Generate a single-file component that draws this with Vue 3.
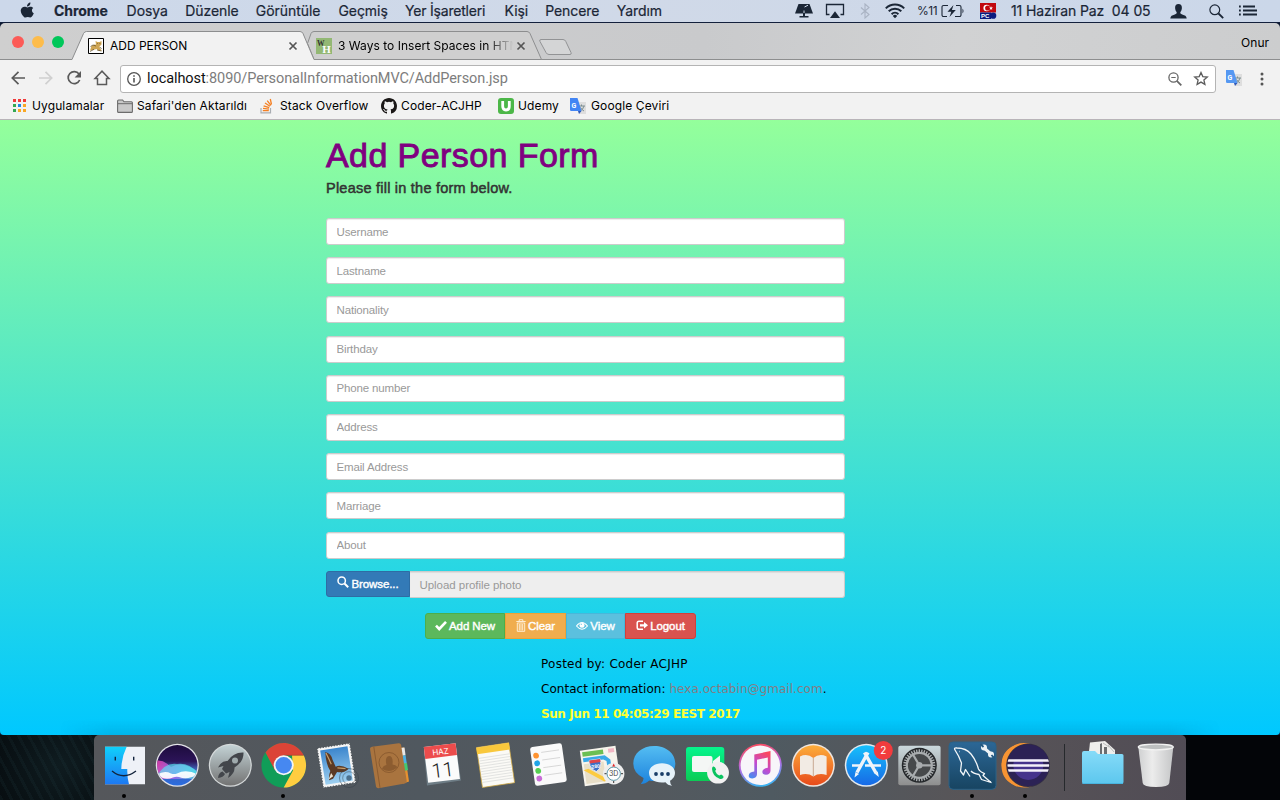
<script setup>
const menus = [
  { label: 'Chrome', w: 54, bold: true },
  { label: 'Dosya', w: 40 },
  { label: 'Düzenle', w: 52 },
  { label: 'Görüntüle', w: 64 },
  { label: 'Geçmiş', w: 48 },
  { label: 'Yer İşaretleri', w: 81, tight: true },
  { label: 'Kişi', w: 22 },
  { label: 'Pencere', w: 53 },
  { label: 'Yardım', w: 44 },
]
const fields = [
  'Username', 'Lastname', 'Nationality', 'Birthday', 'Phone number',
  'Address', 'Email Address', 'Marriage', 'About',
]
const appDots = [
  '#f03a3a', '#f03a3a', '#f03a3a',
  '#34a853', '#1e88e5', '#f9a825',
  '#34a853', '#f9a825', '#f9a825',
]
const teeth = Array.from({ length: 36 }, (_, i) => i * 10)
const noteLines = Array.from({ length: 10 }, (_, i) => 14 + i * 2.7)
const reminders = ['#ff9330', '#20a5e8', '#55cf50', '#c86dd7']
</script>

<template>
  <div class="screen">
    <header class="menubar">
      <svg class="apple" width="15" height="17" viewBox="0 0 15 17">
        <path d="M10.4 0.6c.1 1.300-.4 2.300-1.100 3.000-.7.800-1.500 1.100-2.400 1.000-.1-1.100.4-2.100 1.100-2.800.7-.7 1.700-1.200 2.400-1.200zM13.200 6c-1.800 1.200-1.700 4.200.6 5.200-.5 1.400-1.300 2.600-2.100 3.500-1.400 1.400-2.300.2-3.900.2s-2.500 1.100-3.800 0C1 12.500-.5 8.200 2 5.800c1.300-1.200 2.900-1.200 4.100-.7 1.100.5 1.700.4 2.900-.1 1.600-.6 3.300-.1 4.200 1z" fill="#1b2636"/>
      </svg>
      <nav class="menus">
        <span v-for="m in menus" :key="m.label" :class="{ bold: m.bold, tight: m.tight }" :style="{ width: m.w + 'px' }">{{ m.label }}</span>
      </nav>
      <div class="status">
        <svg width="18" height="16" viewBox="0 0 18 16">
          <path d="M3.500 1h11L18 10.500H0z" fill="#1b2636"/><path d="M8 10h2v3h3.500v1.500h-9V13H8z" fill="#1b2636"/>
          <path d="M9.500 4 13 2.200M9 10V7.500" stroke="#cfdaea" stroke-width="1"/>
        </svg>
        <svg class="s-air" width="20" height="16" viewBox="0 0 20 16">
          <path d="M4.500 11.500H1.500V1.500h17v10h-3" fill="none" stroke="#1b2636" stroke-width="1.300"/><path d="M10 8.200 15 15H5z" fill="#1b2636"/>
        </svg>
        <svg class="s-bt" width="10" height="16" viewBox="0 0 10 16">
          <path d="M1 4.500l8 7-4 3.500V1l4 3.500-8 7" fill="none" stroke="#a9b3c3" stroke-width="1.100"/>
        </svg>
        <svg class="s-wifi" width="20" height="16" viewBox="0 0 20 16">
          <path d="M.8 5.400a13 13 0 0 1 18.400 0M3.700 8.300a9 9 0 0 1 12.600 0M6.600 11.200a4.900 4.900 0 0 1 6.800 0" fill="none" stroke="#1b2636" stroke-width="2"/><path d="M10 15.200l-2.200-2.300a3.200 3.200 0 0 1 4.400 0z" fill="#1b2636"/>
        </svg>
        <span class="pct">%11</span>
        <svg class="s-bat" width="24" height="14" viewBox="0 0 24 14">
          <path d="M7 1.500H2.500a1.500 1.500 0 0 0-1.500 1.500v8a1.500 1.500 0 0 0 1.500 1.500H6M15 1.500h3.500A1.500 1.500 0 0 1 20 3v8a1.500 1.500 0 0 1-1.500 1.500H14" fill="none" stroke="#1b2636" stroke-width="1.100"/>
          <path d="M12.500 1 6.500 7.800h3.800L8.500 13l6.300-7h-3.900z" fill="#1b2636"/><path d="M21.500 4.500q2 2.500 0 5z" fill="#1b2636"/>
        </svg>
        <svg class="s-flag" width="17" height="16" viewBox="0 0 17 16">
          <path d="M0 0h16v9.500H0z" fill="#c1080f"/><circle cx="6.700" cy="5" r="3.300" fill="#fff"/><circle cx="7.700" cy="5" r="2.600" fill="#c1080f"/><path d="M11 3l.5 1.400 1.500.1-1.200.9.5 1.500-1.300-.9-1.200.9.400-1.500-1.100-.9 1.400-.1z" fill="#fff"/>
          <path d="M0 9.500h11V16H0z" fill="#0b1c80"/><text x="1" y="15.200" class="pc">PC</text><circle cx="13.200" cy="12.700" r="3.100" fill="#0b1c80"/>
        </svg>
        <span class="clock">11 Haziran Paz&nbsp; 04 05</span>
        <svg class="s-user" width="17" height="15" viewBox="0 0 17 15">
          <path d="M8.500 0c2.300 0 3.500 1.600 3.400 3.900-.1 1.900-.8 3.300-1.600 4.200 0 1.500.4 2 1.900 2.500 2.800.900 4.300 1.400 4.500 4.000H.300c.2-2.600 1.700-3.100 4.500-4 1.500-.5 1.900-1 1.900-2.500C5.900 7.200 5.200 5.800 5.100 3.900 5 1.600 6.200 0 8.500 0z" fill="#1b2636"/>
        </svg>
        <svg class="s-find" width="15" height="15" viewBox="0 0 15 15"><circle cx="5.800" cy="5.800" r="4.900" fill="none" stroke="#1b2636" stroke-width="1.200"/><path d="M9.500 9.500l4.700 4.700" stroke="#1b2636" stroke-width="1.800"/></svg>
        <svg class="s-list" width="18" height="12" viewBox="0 0 18 12"><path d="M4 2h12M4 6h14M4 10h14M0 2h1.800M0 6h1.800M0 10h1.800" transform="translate(0 -.5)" stroke="#1b2636" stroke-width="1.800"/></svg>
      </div>
    </header>

    <section class="window">
      <div class="tabstrip">
        <svg class="tabshape" width="1280" height="37" viewBox="0 0 1280 37">
          <path d="M0 36.500H1280" stroke="#8d8e8f"/>
          <path d="M307.500 20.500 311 10.500q.9-2 3-2H527q2 0 3 2L541.500 36.500H314z" fill="#cfcfcf" stroke="#8d8e8f"/>
          <path d="M72 36.500 83.500 11q1-2.500 3-2.500H300q2 0 3 2.500L314 36.500V38H72z" fill="#f2f2f2"/>
          <path d="M72 36.500 83.500 10.500q1-2 3-2H300q2 0 3 2L314 36.500" fill="none" stroke="#8d8e8f"/>
          <path d="M541 16.500h22q2 0 2.800 2l5.200 11q.8 2-1 2H549q-2 0-3-2L540 18.500q-1-2 1-2z" fill="#d4d5d6" stroke="#929395"/>
          <path d="M289.500 19.500l7 7m0-7-7 7" stroke="#555" stroke-width="1.700"/>
          <path d="M517.500 19.500l7 7m0-7-7 7" stroke="#555" stroke-width="1.700"/>
        </svg>
        <i class="light red"></i><i class="light amber"></i><i class="light green"></i>
        <svg class="fav1" width="16" height="16" viewBox="0 0 16 16">
          <path d="M.5.500h15v15H.5z" fill="#fff" stroke="#000"/>
          <path d="M2 12.500 3.500 8l3-1.500 1.500.2L7.500 3l2 1h2L13.500 3v3.500l-2 2 .5 2 2 2-3 .5-2.500-2-3.500 1z" fill="#cfa655"/><path d="M2 13.500l4-2.200M2.500 8.500l2.500-1.500 3 1M9 12l4.500 1M12 9l1.500 2M9 5.500h.8M11.500 5.500h.8" stroke="#5a4a2a" stroke-width=".7" fill="none"/>
        </svg>
        <span class="title1">ADD PERSON</span>
        <svg class="fav2" width="16" height="16" viewBox="0 0 16 16"><path d="M0 0h16v16H0z" fill="#93b874"/><text x="1" y="7.500" class="wk" fill="#333">W</text><text x="6.300" y="15" class="wh" fill="#fff">H</text></svg>
        <span class="title2">3 Ways to Insert Spaces in HTM</span>
        <span class="profile">Onur</span>
      </div>

      <div class="toolbar">
        <svg class="navicons" width="120" height="34" viewBox="0 0 120 34">
          <g fill="none" stroke="#5a5a5a" stroke-width="1.700">
            <path d="M25 18H12.500M18.500 11.800 12.300 18l6.200 6.200"/>
            <path d="M39 18h12.500M45.500 11.800 51.700 18l-6.200 6.200" stroke="#d0d0d0"/>
            <path d="M79 14A6 6 0 1 0 79.700 20"/>
            <path d="M95 18.500 102 11.200l7 7.300h-2.500v6h-9v-6z" stroke-width="1.500"/>
          </g>
          <path d="M81 11v6.400h-6.400z" fill="#5a5a5a"/>
        </svg>
        <div class="omnibox">
          <svg width="16" height="16" viewBox="0 0 16 16"><circle cx="8" cy="8" r="6.300" fill="none" stroke="#555" stroke-width="1.300"/><path d="M8 7v4.500M8 4.300v1.500" stroke="#555" stroke-width="1.600"/></svg>
          <span class="url"><b>localhost</b>:8090/PersonalInformationMVC/AddPerson.jsp</span>
          <svg class="zoomic" width="14" height="14" viewBox="0 0 14 14"><circle cx="5.500" cy="5.500" r="4.600" fill="none" stroke="#666" stroke-width="1.300"/><path d="M3.300 5.500h4.400" stroke="#666"/><path d="M8.800 8.800l4.500 4.500" stroke="#666" stroke-width="1.800"/></svg>
          <svg class="star" width="16" height="15" viewBox="0 0 16 15"><path d="M8 1.500l1.800 4.100 4.500.4-3.400 3 1 4.400L8 11.100l-3.900 2.300 1-4.400-3.400-3 4.500-.4z" fill="none" stroke="#5c5c5c" stroke-width="1.300"/></svg>
        </div>
        <svg class="gt" width="17" height="16" viewBox="0 0 17 16"><path d="M5 4h11v12H9z" fill="#dedede"/><path d="M8.500 8h6.500M11.500 6.500V8M14 8q-1 4-4 5M10.500 9.500q1.500 2.500 3.500 3.500" stroke="#7d8f92" fill="none"/><path d="M0 0h7.500l4 13H1.200Q0 13 0 12z" fill="#5598f2"/><path d="M8 13h3.500l-2.500 3z" fill="#3058b8"/><text x="1.600" y="9.500" class="gg">G</text></svg>
        <svg class="dots" width="4" height="14" viewBox="0 0 4 14"><circle cx="2" cy="2" r="1.500"/><circle cx="2" cy="7" r="1.500"/><circle cx="2" cy="12" r="1.500"/></svg>
      </div>

      <div class="bookmarks">
        <div class="bm b0"><span class="apps"><i v-for="(c, i) in appDots" :key="i" :style="{ background: c }"></i></span><span class="t">Uygulamalar</span></div>
        <div class="bm b1"><svg width="16" height="14" viewBox="0 0 16 14"><path d="M.600 12.400V2q0-1 1-1h4l1.400 1.800h7.400q1 0 1 1v8.600q0 1-1 1H1.600q-1 0-1-1z" fill="#c9c9c9" stroke="#6c6c6c" stroke-width="1.100"/><path d="M1 4.700h14" stroke="#6c6c6c"/></svg><span class="t">Safari'den Aktarıldı</span></div>
        <div class="bm b2"><svg width="16" height="16" viewBox="0 0 16 16"><path d="M1 10v4.800h9.500V10" fill="none" stroke="#a9adb2" stroke-width="1.200"/><path d="M2.800 12.700h6M3 10.400l6 .7M3.600 7.800l5.600 1.900M5 5l5 3.200M7.200 2.600l3.700 4.700M10.300 1l1.200 5.500" stroke="#f48024" stroke-width="1.300"/></svg><span class="t">Stack Overflow</span></div>
        <div class="bm b3"><svg width="16" height="16" viewBox="0 0 16 16"><path d="M8 0C3.580 0 0 3.580 0 8c0 3.540 2.290 6.530 5.470 7.590.4.070.55-.170.55-.380 0-.190-.010-.820-.010-1.490-2.010.370-2.530-.490-2.690-.940-.090-.230-.480-.940-.820-1.130-.280-.150-.680-.520-.010-.530.630-.010 1.080.580 1.230.820.720 1.210 1.870.870 2.330.660.070-.520.280-.870.510-1.070-1.780-.2-3.640-.890-3.640-3.950 0-.870.310-1.590.820-2.150-.080-.2-.360-1.020.080-2.120 0 0 .670-.210 2.200.820a7.600 7.600 0 0 1 4 0c1.530-1.040 2.200-.820 2.200-.820.440 1.100.160 1.920.080 2.120.510.560.820 1.270.820 2.150 0 3.070-1.870 3.750-3.650 3.950.290.250.540.730.540 1.480 0 1.070-.010 1.930-.010 2.200 0 .210.150.460.550.380A8 8 0 0 0 16 8c0-4.420-3.580-8-8-8z" fill="#1b1817"/></svg><span class="t">Coder-ACJHP</span></div>
        <div class="bm b4"><svg width="16" height="16" viewBox="0 0 16 16"><rect width="16" height="16" rx="3" fill="#4cb748"/><path d="M4.700 3v5.300q0 3.700 3.300 3.700t3.300-3.700V3" fill="none" stroke="#fff" stroke-width="2.800"/></svg><span class="t">Udemy</span></div>
        <div class="bm b5"><svg width="17" height="16" viewBox="0 0 17 16"><path d="M5 4h11v12H9z" fill="#dedede"/><path d="M8.500 8h6.500M11.500 6.500V8M14 8q-1 4-4 5M10.500 9.500q1.500 2.500 3.500 3.500" stroke="#7d8f92" fill="none"/><path d="M0 0h7.500l4 13H1.200Q0 13 0 12z" fill="#4285f4"/><path d="M8 13h3.500l-2.500 3z" fill="#3058b8"/><text x="1.600" y="9.500" class="gg">G</text></svg><span class="t">Google Çeviri</span></div>
      </div>

      <main class="page">
        <div class="container">
          <h1>Add Person Form</h1>
          <p class="lead">Please fill in the form below.</p>
          <form class="form" @submit.prevent>
            <input v-for="f in fields" :key="f" type="text" :placeholder="f" />
            <div class="upload">
              <button type="button" class="btn primary"><svg width="12" height="12" viewBox="0 0 12 12"><circle cx="4.700" cy="4.700" r="3.700" fill="none" stroke="#fff" stroke-width="1.500"/><path d="M7.500 7.500l3.700 3.700" stroke="#fff" stroke-width="2"/></svg><span>Browse...</span></button>
              <div class="file">Upload profile photo</div>
            </div>
            <div class="actions">
              <button type="button" class="btn add"><svg width="12" height="11" viewBox="0 0 12 11"><path d="M1 5.700 4.200 9 11 1.800" fill="none" stroke="#fff" stroke-width="2.600"/></svg><span>Add New</span></button>
              <button type="button" class="btn clear"><svg width="10" height="13" viewBox="0 0 10 13"><path d="M.300 2.500h9.400M3.200 2.300V.700h3.600v1.600M1.300 4v8.300h7.400V4zM3.300 5v6.500M5 5v6.500M6.700 5v6.500" fill="none" stroke="#fff3df" stroke-width=".9"/></svg><span>Clear</span></button>
              <button type="button" class="btn view"><svg width="12" height="10" viewBox="0 0 12 10"><path d="M.5 5q5.500-7 11 0-5.500 6.500-11 0z" fill="none" stroke="#fff" stroke-width="1.100"/><circle cx="6" cy="4.300" r="2.500" fill="#fff"/><path d="M5 4q0-1 1-1" stroke="#5bc0de" fill="none" stroke-width=".8"/></svg><span>View</span></button>
              <button type="button" class="btn logout"><svg width="12" height="11" viewBox="0 0 12 11"><path d="M7 1.200H3q-1.800 0-1.800 1.800v4.500q0 1.800 1.800 1.800h4" fill="none" stroke="#fff" stroke-width="1.500"/><path d="M4 4.200h4V2l4 3.300-4 3.300V6.400H4z" fill="#fff"/></svg><span>Logout</span></button>
            </div>
          </form>
          <footer>
            <p class="f1">Posted by: Coder ACJHP</p>
            <p class="f2">Contact information: <a>hexa.octabin@gmail.com</a>.</p>
            <p class="f3">Sun Jun 11 04:05:29 EEST 2017</p>
          </footer>
        </div>
      </main>
    </section>

    <div class="desktop">
      <div class="dock">
        <svg class="ic" viewBox="0 0 53 64">
          <defs><linearGradient id="fb" x1="0" y1="0" x2="0" y2="1"><stop stop-color="#10d0fb"/><stop offset="1" stop-color="#1d78f2"/></linearGradient></defs>
          <path d="M7 10.700h40v37.600H7z" fill="#eef1f7"/><path d="M7 10.700h21.700Q23.500 21 23.300 33h6Q29 41 31 48.300H7z" fill="url(#fb)"/>
          <path d="M17.300 20.800v3.700M35.700 20.800v3.700" stroke="#12233c" stroke-width="1.400"/><path d="M14 35q11.500 9.500 24 0" fill="none" stroke="#12233c" stroke-width="1.300"/><circle cx="26" cy="60" r="2"/>
        </svg>
        <svg class="ic" viewBox="0 0 53 64">
          <defs><linearGradient id="si" x1="0" y1="0" x2="0" y2="1"><stop stop-color="#1d0c3d"/><stop offset=".4" stop-color="#2c1458"/><stop offset=".6" stop-color="#3f62b8"/><stop offset="1" stop-color="#2a6ce0"/></linearGradient><linearGradient id="sw"><stop stop-color="#ff3fae"/><stop offset=".45" stop-color="#a56cf0"/><stop offset="1" stop-color="#38e0d8"/></linearGradient><clipPath id="sc"><circle cx="26.300" cy="29.300" r="20.200"/></clipPath></defs>
          <circle cx="26.300" cy="29.300" r="21.500" fill="#e3e3e8"/><circle cx="26.300" cy="29.300" r="20.200" fill="url(#si)"/>
          <g clip-path="url(#sc)"><path d="M4 25q8-2 16 6 13-7 28 6v6H4z" fill="url(#sw)" opacity=".8"/><path d="M6 40q8-14 20-12 12-2 22 10z" fill="#5be4f1" opacity=".65"/><path d="M6 39q7-5 14-1.500 3 1 6 0 9-5 21 1-11 6-19 2.500-3-.8-6 .5-8 3.500-16-2.500z" fill="#fff" opacity=".92"/></g>
        </svg>
        <svg class="ic" viewBox="0 0 53 64">
          <defs><linearGradient id="ro" x1="0" y1="0" x2="0" y2="1"><stop stop-color="#c3d2d5"/><stop offset="1" stop-color="#737373"/></linearGradient></defs>
          <circle cx="26.300" cy="29.300" r="21.500" fill="#d5d9da"/><circle cx="26.300" cy="29.300" r="20.300" fill="url(#ro)"/>
          <path d="M39.500 16.500q-10-.5-16 8.500-6-.5-9.500 6.500l5.500-1.500-1.500 3 4 4.500 3.500-1.500-1.500 6q7-4.500 6.500-10.500 9.500-6 9-15z" fill="#43464b"/><circle cx="31" cy="24.500" r="3" fill="#9faaac"/><path d="M18.500 35.500q-4 1-4.500 6.500 5.500-.5 7-4z" fill="#43464b"/>
        </svg>
        <svg class="ic" viewBox="0 0 53 64">
          <circle cx="26.700" cy="29.300" r="22.300" fill="#109d58"/><path d="M8.500 16.500A22.300 22.300 0 0 1 46.700 19.300H26.700L18 34.500z" fill="#db4437"/><path d="M46.700 19.300A22.300 22.300 0 0 1 26.700 51.600L36 34.500 35 19.300z" fill="#ffcd40"/><path d="M26.700 19.300h20" stroke="#b53828" stroke-width=".6"/>
          <circle cx="26.700" cy="29.300" r="10" fill="#f4f4f4"/><circle cx="26.700" cy="29.300" r="8.200" fill="#4688f1"/><circle cx="26" cy="60" r="2"/>
        </svg>
        <svg class="ic" viewBox="0 0 53 64">
          <defs><linearGradient id="ml" x1="0" y1="0" x2="0" y2="1"><stop stop-color="#3c86cd"/><stop offset="1" stop-color="#9ed0f1"/></linearGradient></defs>
          <g transform="rotate(-9 26.500 29.300)"><path d="M10 9.500h33v40H10z" fill="#f5f5f5"/><path d="M10 9.500h33v40H10z" fill="none" stroke="#50565b" stroke-width="1.300" stroke-dasharray="1.200 1.600"/><path d="M12.700 12.200h27.600v34.600H12.700z" fill="url(#ml)"/>
          <path d="M17.500 14.500q5.500 2 6 9l2 7q5-1.500 12.500 4-5 4-12 1.500l-5 6-4 1q0-5 2.500-9-3.500-8-2-19.500z" fill="#5b3a25"/><path d="M18 15.500q2 6 3.500 12M27 32l8 2" stroke="#c79d69" stroke-width="1.200" fill="none"/><path d="M20 36l-3.500 6 5-2.500z" fill="#eee3d0"/></g>
          <circle cx="39" cy="42" r="9.500" fill="none" stroke="#364047" opacity=".5"/><circle cx="39" cy="42" r="6.300" fill="none" stroke="#364047" opacity=".45"/><circle cx="39" cy="42" r="2.700" fill="#2e4b66" opacity=".7"/>
        </svg>
        <svg class="ic" viewBox="0 0 53 64">
          <path d="M37 12l4-.5 5 34-6 2z" fill="#e8912f"/><path d="M37 12l4.500-.5 1 7.500-4 1z" fill="#e9e9e9"/><path d="M38 20l4.500-1 1.200 8-4 1z" fill="#4ab1e8"/><path d="M39 28l5-1 1 7-4 1z" fill="#43c971"/>
          <path d="M9 10.700 35.700 7.300q2-.2 2.400 1.700l5.600 36q.2 2-1.800 2.500L15.500 52.300q-2 .2-2.500-1.800L7 13q-.2-2 2-2.300z" fill="#a9743f"/><path d="M10.800 10.800l6.200 41" stroke="#8c5c30"/><circle cx="26" cy="26.500" r="10" fill="#a9743f" stroke="#8c5c30"/><path d="M19 33q1-3.500 4.500-4-2-8 2.500-9 4.500 0 3.500 8.500 3 0 5 2.500-7 7-15.500 2z" fill="#8c5c30"/>
        </svg>
        <svg class="ic" viewBox="0 0 53 64">
          <path d="M8 15 40 10l5 34.500-34 5z" fill="#6e7d86"/><g transform="rotate(-7 26 28)"><path d="M10 9h32v36H10z" fill="#fbfbfb"/><path d="M10 9h32v12H10z" fill="#ec4c4c"/><text x="26" y="18.500" text-anchor="middle" class="haz">HAZ</text><text x="26" y="41" text-anchor="middle" class="day">11</text></g>
        </svg>
        <svg class="ic" viewBox="0 0 53 64"><g transform="rotate(-8.500 26.500 29)"><path d="M10.300 9h32.500v40.300H10.300z" fill="#fbfaf6" stroke="#d2a93d" stroke-width=".7"/><path d="M10 9h33v6.700H10z" fill="#f9c83c"/><path v-for="y in noteLines" :key="y" :d="`M11 ${y + 6}h31`" stroke="#d9dad9" stroke-width=".7"/></g></svg>
        <svg class="ic" viewBox="0 0 53 64"><g transform="rotate(-8 26.500 29)"><rect x="10.500" y="9" width="32" height="39" rx="2.500" fill="#fafafa"/><g v-for="(c, i) in reminders" :key="c"><circle cx="15.500" :cy="18 + i * 7.700" r="2.900" :fill="c"/><path :d="`M21 ${15.500 + i * 7.700}h18`" stroke="#d1d1d1" stroke-width=".8"/></g></g></svg>
        <svg class="ic" viewBox="0 0 53 64"><g transform="rotate(-8 25 29)"><path d="M7 12h36v36H7z" fill="#f7f4ec"/><path d="M9 14h21v4.500H9z" fill="#6cbf53"/><path d="M35 14h6v4h-6z" fill="#f2b7c4"/><path d="M9 20h22l5 5v21h-4V26l-3-2H9z" fill="#39a9e8"/><path d="M9 26h20v20H9z" fill="#e8dfc8"/><path d="M8 32l5-1 19 14-5 1z" fill="#fccb40"/><path d="M15 23h11v5q-1 5-5.500 7-4.500-2-5.500-7z" fill="#3d6fc6" stroke="#fff" stroke-width=".7"/><path d="M15 23h11v3H15z" fill="#e0454a"/><text x="20.500" y="31.500" text-anchor="middle" class="i280">280</text></g><circle cx="38.700" cy="37.700" r="10.700" fill="#eee"/><circle cx="38.700" cy="37.700" r="6.700" fill="#fff" stroke="#5d98a8" stroke-width="1"/><path d="M38.700 27.500l1.500 3h-3z" fill="#e42a2a"/><path d="M38.700 45v2M29.500 37.700h2M46 37.700h2" stroke="#333"/><text x="38.700" y="40.200" text-anchor="middle" class="d3">3D</text></svg>
        <svg class="ic" viewBox="0 0 53 64">
          <defs><linearGradient id="ms" x1="0" y1="0" x2="0" y2="1"><stop stop-color="#54bdf2"/><stop offset="1" stop-color="#1d83dd"/></linearGradient></defs>
          <path d="M26.300 10c12 0 21 7.500 21 17.500S38 45 26.300 45q-3 0-5-.5-4 3.500-8.500 3.500 3-3 2.700-6Q5.300 37 5.300 27.500C5.300 17.500 14 10 26.300 10z" fill="url(#ms)"/><path d="M34 27.200c7.300 0 13 4 13 9.500 0 4-2.500 6.500-5 8q0 3 2 5-4.500-.5-6.500-3.500-16 1.500-16.500-9.500c0-5.500 5.700-9.500 13-9.500z" fill="#e6f2fa"/><g fill="#193d68"><circle cx="28" cy="38" r="1.900"/><circle cx="34" cy="38" r="1.900"/><circle cx="40" cy="38" r="1.900"/></g>
        </svg>
        <svg class="ic" viewBox="0 0 53 64"><defs><linearGradient id="ft" x1="0" y1="0" x2="0" y2="1"><stop stop-color="#05f58d"/><stop offset="1" stop-color="#0ccb55"/></linearGradient></defs><rect x="5" y="11" width="38.300" height="34" rx="3" fill="url(#ft)"/><rect x="11" y="20" width="20.500" height="16" rx="2" fill="#f4f7f5"/><path d="M32 25l7-5.500V37l-7-5z" fill="#f4f7f5"/><circle cx="37" cy="36.700" r="10.900" fill="#f2f2f2"/><path d="M32 30.500q2-.5 3.200 3-1 1-1 1.500 1 3 4 4.500l2-1q3 1.500 2.300 3-1.500 2-3.500 1.500Q31.500 40.500 31 33q0-2 1-2.500z" fill="#0bc360"/></svg>
        <svg class="ic" viewBox="0 0 53 64">
          <defs><linearGradient id="it" x1=".4" y1="0" x2=".6" y2="1"><stop stop-color="#fb4b5e"/><stop offset=".5" stop-color="#b46ce5"/><stop offset="1" stop-color="#35b9f4"/></linearGradient><linearGradient id="nt" x1=".7" y1="0" x2=".2" y2="1"><stop stop-color="#fb475e"/><stop offset=".5" stop-color="#c14bd1"/><stop offset="1" stop-color="#4a8af0"/></linearGradient></defs>
          <circle cx="26.300" cy="29.300" r="21.500" fill="url(#it)"/><circle cx="26.300" cy="29.300" r="19.700" fill="#f8f6fa"/><path d="M20.300 18.500 36.500 15v19.500q0 4-4.500 4.300-3.500 0-3.700-2.800.2-3.500 5.500-4.200V21.500L23 23.800v14.500q-.2 4-4.700 4.200-3.500 0-3.600-2.700.2-3.800 5.600-4.300z" fill="url(#nt)"/>
        </svg>
        <svg class="ic" viewBox="0 0 53 64">
          <defs><linearGradient id="ib" x1="0" y1="0" x2="0" y2="1"><stop stop-color="#fcad3b"/><stop offset="1" stop-color="#e84b1b"/></linearGradient></defs>
          <circle cx="26.300" cy="29.300" r="21.500" fill="#eee6e0"/><circle cx="26.300" cy="29.300" r="20" fill="url(#ib)"/><path d="M26.300 22q-6-5-13.300-1.500V39q7.500-2.500 13.300 1.500Q32 36.500 39.600 39V20.500Q32.300 17 26.300 22z" fill="#f2ebe4"/><path d="M26.300 22v18" stroke="#c7a892"/>
        </svg>
        <svg class="ic" viewBox="0 0 53 64">
          <defs><linearGradient id="as" x1="0" y1="0" x2="0" y2="1"><stop stop-color="#16c0fb"/><stop offset="1" stop-color="#1769e6"/></linearGradient></defs>
          <circle cx="26.300" cy="29.300" r="21.500" fill="#e3e9ee"/><circle cx="26.300" cy="29.300" r="20" fill="url(#as)"/><path d="M12 29.500h8m5 0h16" stroke="#eef4fa" stroke-width="2.600"/><path d="M28 16.500 17 36.500M24.500 16.500 36 37" stroke="#eef4fa" stroke-width="3.400"/><path d="M15.500 36l3.500 2-4.500 3.500zM34.500 37.500l3.300-2 1 5.500z" fill="#eef4fa"/><circle cx="43.300" cy="14.500" r="9.500" fill="#f23b3d"/><text x="43.300" y="18" text-anchor="middle" class="badge">2</text>
        </svg>
        <svg class="ic" viewBox="0 0 53 64">
          <defs><linearGradient id="sp" x1="0" y1="0" x2="0" y2="1"><stop stop-color="#cbd9dd"/><stop offset="1" stop-color="#8e8e8e"/></linearGradient></defs>
          <rect x="5.300" y="9.700" width="42.300" height="39.500" rx="2" fill="url(#sp)"/><circle cx="26.300" cy="29.300" r="17.500" fill="#24272a"/><path v-for="t in teeth" :key="t" d="M25.600 13.300h1.400v3h-1.400z" :transform="`rotate(${t} 26.300 29.300)`" fill="#a8acae"/><circle cx="26.300" cy="29.300" r="12.500" fill="#46494b" stroke="#a8acae" stroke-width="2.200"/><path d="M26.300 29.300H39M26.300 29.300l-6.500-11M26.300 29.300l-6.500 11" stroke="#a8acae" stroke-width="2.200"/><circle cx="26.300" cy="29.300" r="3.200" fill="#a8acae"/>
        </svg>
        <svg class="ic" viewBox="0 0 53 64">
          <defs><linearGradient id="my" x1="0" y1="0" x2="0" y2="1"><stop stop-color="#2c6796"/><stop offset="1" stop-color="#174461"/></linearGradient></defs>
          <rect x="3" y="6" width="47" height="47.300" rx="4" fill="url(#my)" stroke="#2a6288"/><path d="M9 14q-1.500-2.500 2-2 9 0 14 6 5 6 7.500 15 1 2.500 6 4.500l-1.500 2 8 7-9.500-3-2.500-5q-6-1-8-3.500M9 14l3.500 6 3 7-1 8 3 4 2-5.500 4.500 7M13 15.500h.5" fill="none" stroke="#f2f6f9" stroke-width="1.300" stroke-linejoin="round"/><path d="M37.500 11.500 45 18" stroke="#eef3f6" stroke-width="3"/><circle cx="38" cy="11.500" r="3" fill="#eef3f6"/><circle cx="45" cy="18.500" r="3" fill="#eef3f6"/><path d="M34.500 8l3 3M48 22l-2.500-3" stroke="#255980" stroke-width="1.800"/><circle cx="26" cy="60" r="2"/>
        </svg>
        <svg class="ic" viewBox="0 0 53 64">
          <defs><clipPath id="ec"><circle cx="29.300" cy="29.300" r="20.800"/></clipPath></defs>
          <path d="M26 7.200a22.300 22.300 0 0 0 0 44.500Q2.500 49 2.500 29.300T26 7.200z" fill="#f79433"/><circle cx="25" cy="29.300" r="22.300" fill="#f79433"/><circle cx="29" cy="29.300" r="21.800" fill="#342f45"/><circle cx="29.300" cy="29.300" r="20.800" fill="#2c2255"/><g clip-path="url(#ec)"><circle cx="29.300" cy="29" r="15" fill="#45338c"/><path d="M7 5h46v18.500H7z" fill="#2c2255"/><path d="M7 24.500h46M7 29.500h46M7 34.500h46" stroke="#f4f1f9" stroke-width="2.300"/></g><circle cx="26" cy="60" r="2"/>
        </svg>
        <i class="sep"></i>
        <svg class="ic" viewBox="0 0 53 64">
          <defs><linearGradient id="fo" x1="0" y1="0" x2="0" y2="1"><stop stop-color="#86dbf8"/><stop offset="1" stop-color="#5cc7ee"/></linearGradient></defs>
          <path d="M13 6.500 28 5l10 9v10H11z" fill="#eeeeec"/><path d="M23 8l2-1v14h-2zM27 11h3v8h-3z" fill="#6a6d6f"/><path d="M26 7l6 4m-1-2 6 7" stroke="#babcbc"/><path d="M5 17q0-2 2-2h11l3 3h24q1.500 0 1.500 1.500V46q0 2-2 2H7q-2 0-2-2z" fill="url(#fo)"/><path d="M5.500 47.500h40.500" stroke="#49b5df"/>
        </svg>
        <svg class="ic" viewBox="0 0 53 64">
          <defs><linearGradient id="tr"><stop stop-color="#cfd0d1"/><stop offset=".4" stop-color="#ececec"/><stop offset="1" stop-color="#c5c6c7"/></linearGradient></defs>
          <path d="M8.300 11 12.700 47q.5 4 13.300 4t13.300-4L43.300 11z" fill="url(#tr)"/><ellipse cx="25.800" cy="11" rx="17.500" ry="2.800" fill="#bdbfc0" stroke="#f2f2f2" stroke-width="1.300"/>
        </svg>
      </div>
    </div>
  </div>
</template>

<style>
body { background: #04090c; overflow: hidden; }
</style>

<style scoped>
* { box-sizing: border-box; }
.screen { width: 1280px; height: 800px; display: flex; flex-direction: column; overflow: hidden; font-family: Inter, sans-serif; background: #0c1830; }
svg { display: block; flex: none; }
.menubar { height: 23px; flex: none; display: flex; align-items: center; background: linear-gradient(90deg, #ccd8ea, #d0d9e8 50%, #cbd7e9); border-bottom: 1px solid #13203c; padding-left: 20px; color: #1b2636; font-size: 14px; letter-spacing: 0; }
.apple { margin-top: -1px; }
.menus { display: flex; gap: 18.600px; margin-left: 19px; line-height: 22px; }
.menus span { white-space: nowrap; letter-spacing: -.05px; -webkit-text-stroke: .2px #1b2636; }
.menus .bold { font-weight: 700; }
.menus .tight { letter-spacing: -.2px; }
.status { margin-left: auto; display: flex; align-items: center; padding-right: 23px; line-height: 22px; }
.s-air { margin-left: 12px; }
.s-bt { margin-left: 15px; }
.s-wifi { margin-left: 15px; }
.pct { font-size: 12px; margin-left: 12px; width: 21px; letter-spacing: -.5px; white-space: nowrap; }
.s-bat { margin-left: 3px; }
.s-flag { margin-left: 15px; }
.pc { font: bold 6px "Liberation Sans", sans-serif; fill: #fff; }
.clock { margin-left: 14px; width: 140px; white-space: nowrap; letter-spacing: -.1px; -webkit-text-stroke: .2px #1b2636; }
.s-user { margin-left: 19px; }
.s-find { margin-left: 22px; }
.s-list { margin-left: 15px; }

.window { height: 712px; flex: none; display: flex; flex-direction: column; border-radius: 5px 5px 4px 4px; overflow: hidden; }
.tabstrip { height: 37px; position: relative; display: flex; align-items: center; background: linear-gradient(90deg, #cfcfcf, #c9cacc 55%, #d1d2d3 75%, #cccdce); flex: none; font-size: 12px; color: #000; padding-left: 12px; }
.tabshape { position: absolute; left: 0; top: 0; }
.tabstrip > :not(.tabshape) { position: relative; }
.light { width: 12px; height: 12px; border-radius: 50%; margin-right: 8px; flex: none; }
.red { background: #fc5b57; } .amber { background: #fdbc4b; } .green { background: #00c75a; }
.fav1 { margin-left: 16px; margin-top: 9px; }
.title1 { margin-left: 6px; width: 206px; margin-top: 8px; white-space: nowrap; letter-spacing: -.02px; }
.fav2 { margin-top: 9px; }
.title2 { margin-left: 6px; width: 177px; margin-top: 8px; white-space: nowrap; letter-spacing: .03px; -webkit-mask-image: linear-gradient(90deg, #000 84%, transparent 99%); mask-image: linear-gradient(90deg, #000 84%, transparent 99%); }
.profile { margin-left: auto; margin-right: 11px; margin-top: 2px; }
.toolbar { height: 34px; flex: none; background: #f2f2f2; display: flex; align-items: center; }
.omnibox { width: 1096px; height: 28px; margin-top: 3px; border: 1px solid #b4b4b4; border-radius: 3px; background: #fff; display: flex; align-items: center; padding-left: 5px; }
.url { margin-left: 5px; font: 14.500px Roboto, sans-serif; letter-spacing: -.08px; color: #7d7d7d; white-space: nowrap; }
.url b { font-weight: 400; color: #111; }
.zoomic { margin-left: auto; } .star { margin-left: 11px; margin-right: 6px; }
.gt { margin: 1px 0 0 10px; } .dots { margin: 3px 0 0 17px; fill: #555; }
.gg { font: bold 7px Roboto, sans-serif; fill: #fff; }
.wk { font: bold 7.500px "Liberation Serif", serif; } .wh { font: bold 11px "Liberation Serif", serif; }
.bookmarks { height: 26px; flex: none; background: #f2f2f2; border-bottom: 1px solid #b9b4b9; display: flex; align-items: center; padding: 0 0 2px 12px; font-size: 12px; letter-spacing: .12px; color: #000; }
.bm { display: flex; align-items: center; gap: 4px; white-space: nowrap; flex: none; }
.bm .t { line-height: 20px; }
.b0 { width: 105px; gap: 7px; } .b1 { width: 143px; } .b2 { width: 121px; } .b3 { width: 117px; } .b4 { width: 72px; }
.apps { display: grid; grid-template-columns: repeat(3, 3px); gap: 2px; width: 13px; padding-left: 1px; }
.apps i { width: 3px; height: 3px; }

.page { flex: 1; background: linear-gradient(#94ff9b, #00c8ff); position: relative; }
.page::after { content: ""; position: absolute; left: 60px; right: 60px; bottom: 0; height: 16px; background: linear-gradient(transparent, rgba(0, 70, 110, .14)); -webkit-mask-image: linear-gradient(90deg, transparent, #000 50px, #000 calc(100% - 50px), transparent); mask-image: linear-gradient(90deg, transparent, #000 50px, #000 calc(100% - 50px), transparent); }
.container { width: 519px; margin-left: 326px; padding-top: 15px; font-family: "Liberation Sans", sans-serif; }
h1 { margin: 0; font-size: 34px; font-weight: 400; line-height: 40px; letter-spacing: .42px; color: #800080; -webkit-text-stroke: .9px #800080; white-space: nowrap; }
.lead { margin: 4px 0 0; line-height: 18px; font-size: 14.500px; letter-spacing: .23px; color: #333; -webkit-text-stroke: .5px #333; white-space: nowrap; }
.form { margin-top: 21px; display: flex; flex-direction: column; gap: 12.200px; }
input, .file { height: 27px; border: 1px solid #ccc; border-radius: 3px; background: #fff; padding: 0 9.500px; font: 11.500px "Liberation Sans", sans-serif; letter-spacing: -.15px; width: 100%; box-shadow: inset 0 1px 1px rgba(0, 0, 0, .075); outline: none; }
input::placeholder { color: #999; opacity: 1; }
.upload { display: flex; }
.file { background: #eee; color: #999; border-radius: 0 3px 3px 0; line-height: 26px; border-left: 0; letter-spacing: -.05px; }
.btn { display: flex; align-items: center; justify-content: center; gap: 2px; height: 26px; border: 1px solid; color: #fff; font: 11.500px "Liberation Sans", sans-serif; letter-spacing: -.1px; -webkit-text-stroke: .4px #fff; padding: 0; white-space: nowrap; flex: none; }
.primary { width: 84px; background: #337ab7; border-color: #2e6da4; border-radius: 3px 0 0 3px; }
.primary svg { margin-top: -3px; }
.actions { display: flex; margin: 3px 0 0 99px; }
.add { width: 80px; background: #5cb85c; border-color: #4cae4c; border-radius: 3px 0 0 3px; }
.clear { width: 61px; background: #f0ad4e; border-color: #eea236; }
.view { width: 59px; background: #5bc0de; border-color: #46b8da; }
.logout { width: 71px; background: #d9534f; border-color: #d43f3a; border-radius: 0 3px 3px 0; }
footer { margin: 13px 0 0 215px; font: 12px "DejaVu Sans", sans-serif; color: #000; }
footer p { margin: 0; height: 25px; line-height: 25px; white-space: nowrap; }
footer a { color: #857d84; }
.f1 { letter-spacing: .25px; }
.f2 { letter-spacing: .04px; }
.f3 { color: #ff3; font-weight: 700; letter-spacing: -.42px; }

.desktop { flex: 1; background: linear-gradient(90deg, transparent 90%, #030508 93%), repeating-linear-gradient(62deg, rgba(40, 75, 82, .13) 0 3px, transparent 3px 9px), radial-gradient(circle at 60px 30px, #0f1c20, transparent 90px), #05090c; display: flex; }
.dock { margin-left: 94px; width: 1092px; height: 65px; padding: 1px 0 0 4px; background: linear-gradient(90deg, #55575b, #50585f 30%, #54595e 50%, #4f5a61 62%, #585558 80%, #514c55); border-radius: 5px 5px 0 0; display: flex; }
.ic { width: 53px; height: 64px; }
.sep { flex: none; width: 1px; height: 47px; margin: 8px 12px 0; background: #26292c; }
.haz { font: 8px Inter, sans-serif; fill: #fff; }
.day { font: 300 20px Roboto, sans-serif; fill: #222; }
.i280 { font: bold 5px Roboto, sans-serif; fill: #fff; }
.d3 { font: 7px Inter, sans-serif; fill: #444; }
.badge { font: 10px Inter, sans-serif; fill: #fff; }
</style>
